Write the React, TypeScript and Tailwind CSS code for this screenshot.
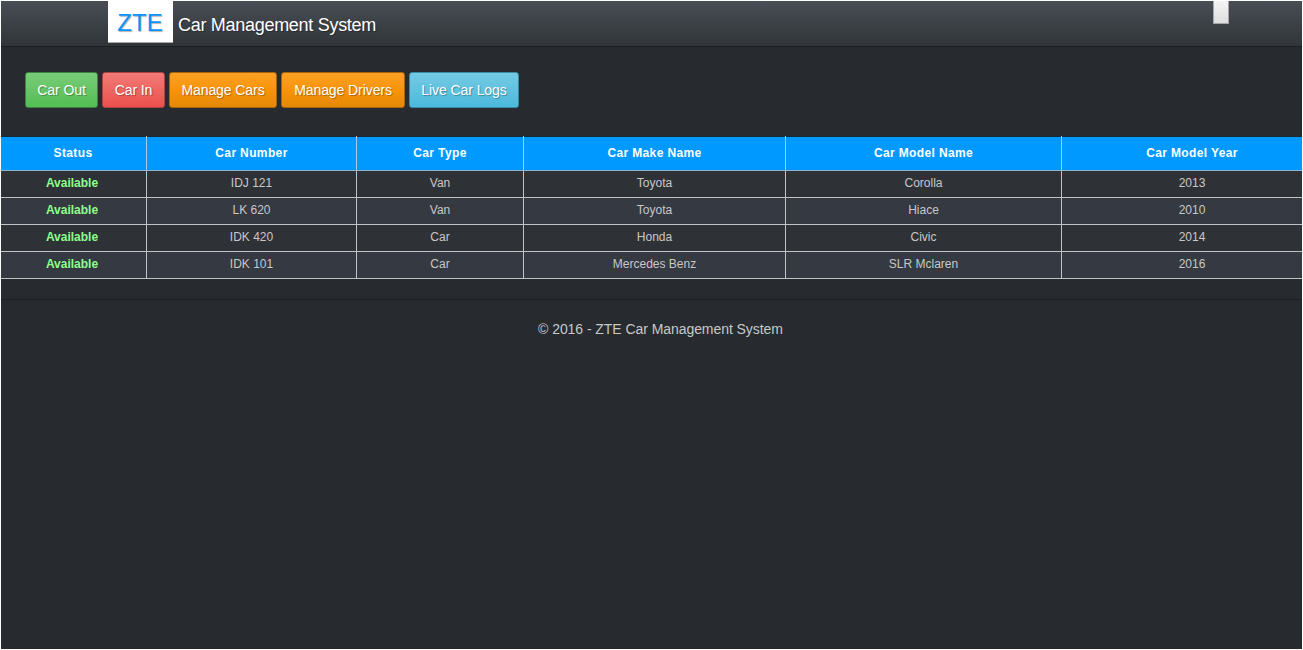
const columns = [
  'Status',
  'Car Number',
  'Car Type',
  'Car Make Name',
  'Car Model Name',
  'Car Model Year',
];

const cars = [
  ['Available', 'IDJ 121', 'Van', 'Toyota', 'Corolla', '2013'],
  ['Available', 'LK 620', 'Van', 'Toyota', 'Hiace', '2010'],
  ['Available', 'IDK 420', 'Car', 'Honda', 'Civic', '2014'],
  ['Available', 'IDK 101', 'Car', 'Mercedes Benz', 'SLR Mclaren', '2016'],
];

const actions = [
  { label: 'Car Out', style: 'w-[73px] from-[#78cc78] to-[#53be53] border-[#3f8043]' },
  { label: 'Car In', style: 'w-[63px] from-[#f17a77] to-[#ec4f4b] border-[#a94442]' },
  { label: 'Manage Cars', style: 'w-[108px] from-[#faa123] via-[#f89406] to-[#e48806] border-[#a96608]' },
  { label: 'Manage Drivers', style: 'w-[124px] from-[#faa123] via-[#f89406] to-[#e48806] border-[#a96608]' },
  { label: 'Live Car Logs', style: 'w-[110px] from-[#74cae3] to-[#4ab9db] border-[#3c8ca5]' },
];

const gridCols = 'grid grid-cols-[146px_210px_167px_262px_276px_261px]';

function Header() {
  return (
    <header className="flex h-[46px] items-start border-b border-[#1c1f22] bg-linear-to-b from-[#484e55] to-[#313539] pl-[107px]">
      <div className="flex h-[42px] w-[65px] items-center justify-center border-b border-[#a5a8aa] bg-white pt-[3px] pr-px text-[24px] leading-none text-[#0d92fd] [text-shadow:1px_1px_1px_rgba(0,0,0,0.3)]">
        ZTE
      </div>
      <h1 className="ml-[5px] pt-[14px] text-[18px] leading-5 tracking-[-0.29px] whitespace-nowrap text-white [text-shadow:1px_1px_1px_rgba(0,0,0,0.3)]">
        Car Management System
      </h1>
      <button
        aria-label="Toggle menu"
        className="mr-[73px] ml-auto h-[23px] w-4 border-x border-b border-[#a3a5a7] bg-linear-to-b from-[#f4f4f4] to-[#dedede]"
      />
    </header>
  );
}

export default function App() {
  return (
    <div className="h-[650px] w-[1303px] overflow-hidden border border-white bg-[#272b30] font-['Liberation_Sans',Arial,sans-serif] text-[#c8c8c8]">
      <Header />
      <nav className="flex h-[89px] gap-1 pt-[25px] pl-6">
        {actions.map((action) => (
          <button
            key={action.label}
            className={`h-9 rounded-[3px] border bg-linear-to-b text-center text-[14px] leading-5 tracking-[-0.08px] whitespace-nowrap text-white [text-shadow:1px_1px_1px_rgba(0,0,0,0.3)] ${action.style}`}
          >
            {action.label}
          </button>
        ))}
      </nav>
      <main className="w-[1319px]">
        <div className={`${gridCols} h-[35px] bg-[#0099ff] text-center text-[12px] leading-[33px] font-bold tracking-[0.37px] text-white`}>
          {columns.map((column) => (
            <div
              key={column}
              className="border-r border-b border-[#a8cce3] border-b-[#8cb5d2] pt-px shadow-[inset_0_1px_0_#1d2a36] first:pr-px"
            >
              {column}
            </div>
          ))}
        </div>
        {cars.map((car) => (
          <div
            key={car[1]}
            className={`${gridCols} h-[27px] text-center text-[12px] leading-[24px] even:bg-[#2e3236] odd:bg-[#353941]`}
          >
            {car.map((value, index) => (
              <div
                key={columns[index]}
                className="border-r border-b border-[#c2c3c5] first:pr-[3px] first:font-bold first:text-[#8cff8c]"
              >
                {value}
              </div>
            ))}
          </div>
        ))}
        <footer className="mt-5 border-t border-[#1c1e22] pt-[19px] text-center text-[14px] leading-5 tracking-[-0.06px]">
          © 2016 - ZTE Car Management System
        </footer>
      </main>
    </div>
  );
}
